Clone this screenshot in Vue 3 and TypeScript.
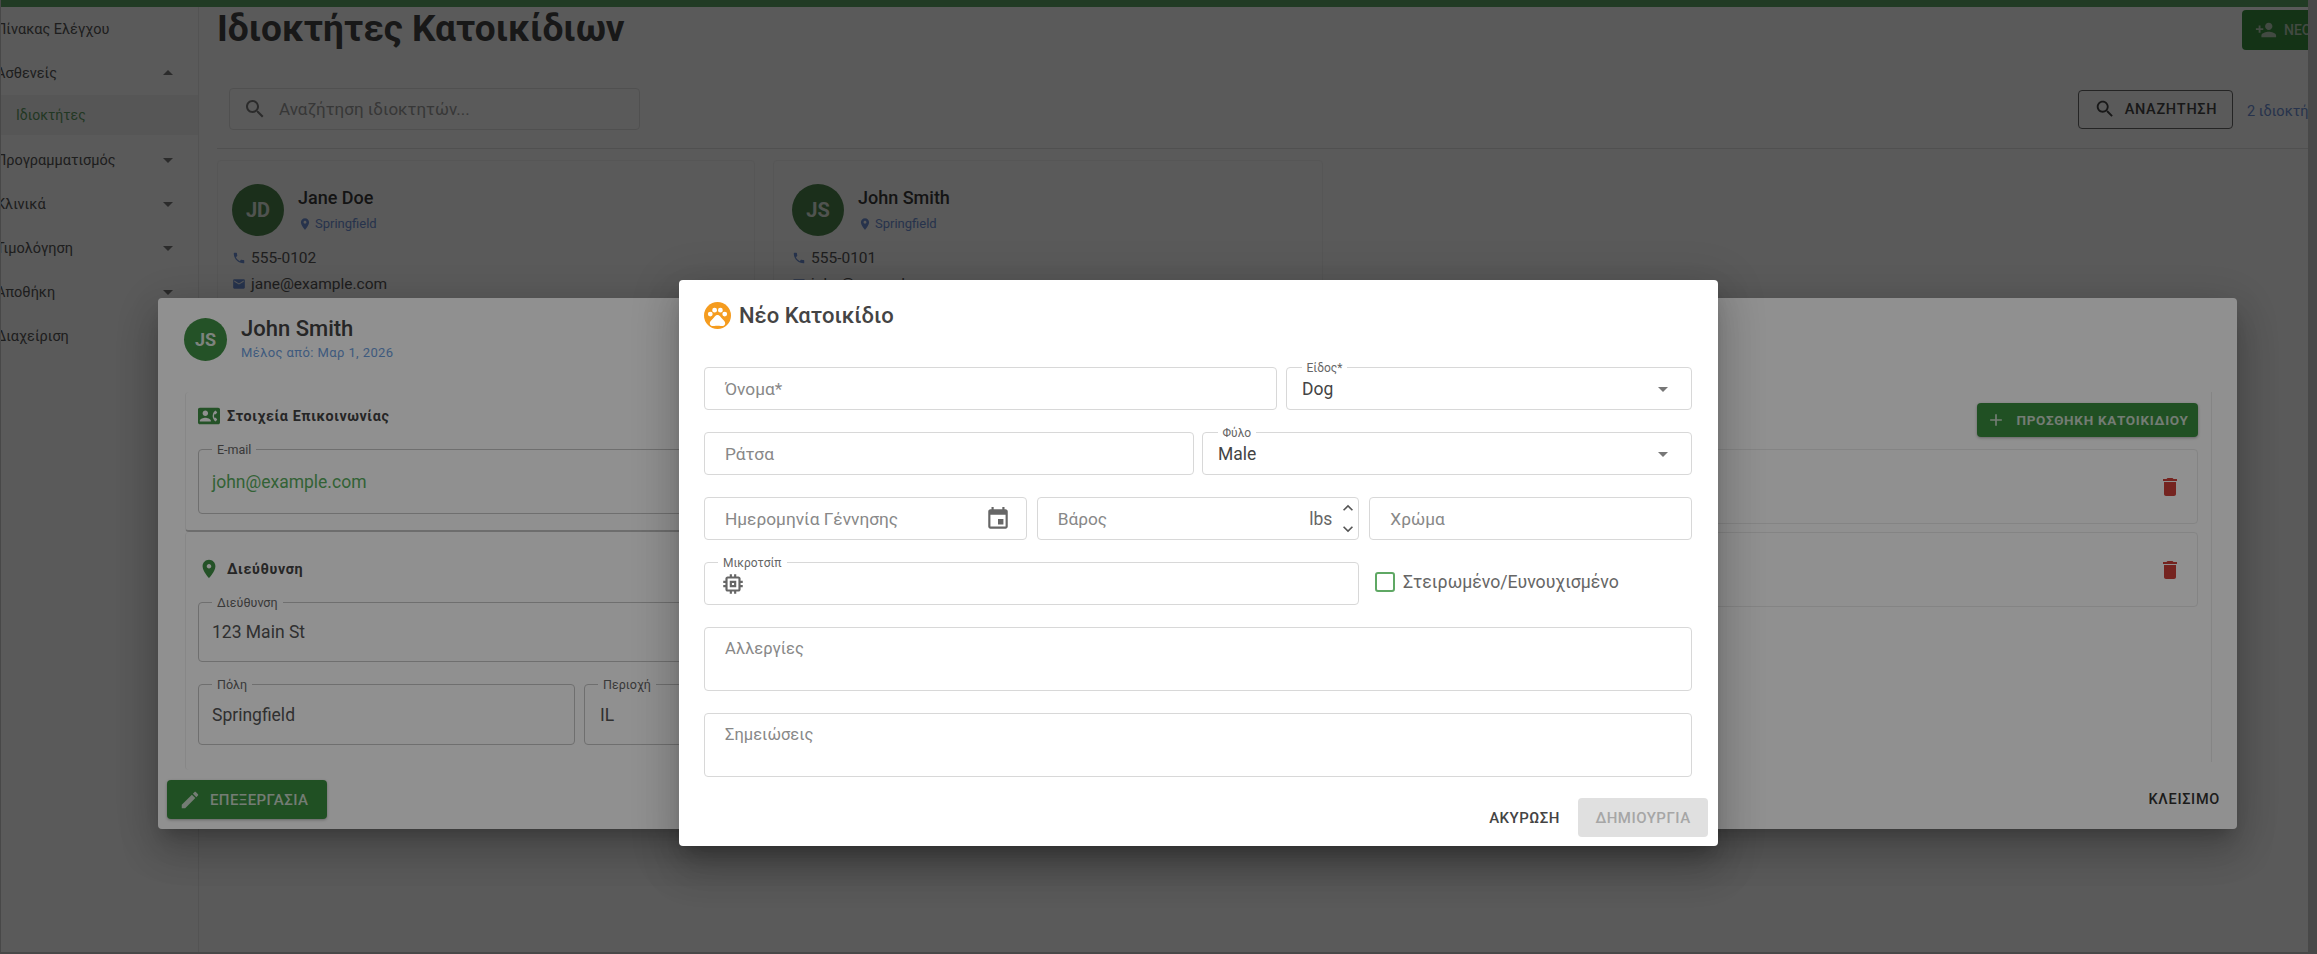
<template>
  <div class="app">
    <div class="shell">
      <div class="top-line"></div>
      <div class="page">
        <!-- side menu -->
        <aside class="sidebar">
          <div
            v-for="item in navItems"
            :key="item.label"
            :class="['nav-item', { child: item.child }]"
          >
            <span class="nav-label">{{ item.label }}</span>
            <svg v-if="item.arrow" class="nav-arrow" viewBox="0 0 24 24">
              <path :d="item.arrow === 'up' ? icons.arrowUp : icons.arrowDown" />
            </svg>
          </div>
        </aside>

        <main class="content">
          <div class="head-row">
            <h1>Ιδιοκτήτες Κατοικίδιων</h1>
            <button class="btn-new">
              <svg viewBox="0 0 24 24"><path :d="icons.personAdd" /></svg>
              <span>ΝΕΟΣ ΙΔΙΟΚΤΗΤΗΣ</span>
            </button>
          </div>

          <div class="search-row">
            <div class="search-box">
              <svg viewBox="0 0 24 24"><path :d="icons.search" /></svg>
              <span>Αναζήτηση ιδιοκτητών...</span>
            </div>
            <button class="btn-search">
              <svg viewBox="0 0 24 24"><path :d="icons.search" /></svg>
              <span>ΑΝΑΖΗΤΗΣΗ</span>
            </button>
            <span class="owner-count">2 ιδιοκτήτες</span>
          </div>

          <div class="owner-grid">
            <div v-for="owner in owners" :key="owner.initials" class="owner-card">
              <div class="owner-top">
                <div class="avatar">{{ owner.initials }}</div>
                <div>
                  <div class="owner-name">{{ owner.name }}</div>
                  <div class="owner-city">
                    <svg viewBox="0 0 24 24"><path :d="icons.pin" /></svg>
                    <span>{{ owner.city }}</span>
                  </div>
                </div>
              </div>
              <div class="owner-line">
                <svg viewBox="0 0 24 24"><path :d="icons.phone" /></svg>
                <span>{{ owner.phone }}</span>
              </div>
              <div class="owner-line">
                <svg viewBox="0 0 24 24"><path :d="icons.mail" /></svg>
                <span>{{ owner.email }}</span>
              </div>
            </div>
          </div>
        </main>
      </div>
    </div>

    <div class="backdrop first"></div>

    <!-- owner details dialog -->
    <section class="detail-dialog">
      <header class="detail-head">
        <div class="avatar small">JS</div>
        <div>
          <div class="detail-name">John Smith</div>
          <div class="detail-since">Μέλος από: Μαρ 1, 2026</div>
        </div>
      </header>

      <div class="detail-body">
        <div class="detail-left">
          <div class="paper contact">
            <div class="paper-title">
              <svg viewBox="0 0 24 24"><path :d="icons.contact" /></svg>
              <span>Στοιχεία Επικοινωνίας</span>
            </div>
            <div class="read-field email">
              <label>E-mail</label>
              <span class="link">john@example.com</span>
            </div>
          </div>
          <div class="paper address">
            <div class="paper-title">
              <svg viewBox="0 0 24 24"><path :d="icons.pin" /></svg>
              <span>Διεύθυνση</span>
            </div>
            <div class="read-field street">
              <label>Διεύθυνση</label>
              <span>123 Main St</span>
            </div>
            <div class="city-row">
              <div class="read-field city">
                <label>Πόλη</label>
                <span>Springfield</span>
              </div>
              <div class="read-field region">
                <label>Περιοχή</label>
                <span>IL</span>
              </div>
            </div>
          </div>
        </div>

        <div class="detail-right">
          <button class="btn-green add-pet">
            <svg viewBox="0 0 24 24"><path :d="icons.plus" /></svg>
            <span>ΠΡΟΣΘΗΚΗ ΚΑΤΟΙΚΙΔΙΟΥ</span>
          </button>
          <div v-for="n in 2" :key="n" class="pet-row">
            <svg viewBox="0 0 24 24"><path :d="icons.trash" /></svg>
          </div>
        </div>
      </div>

      <footer class="detail-foot">
        <button class="btn-green edit">
          <svg viewBox="0 0 24 24"><path :d="icons.edit" /></svg>
          <span>ΕΠΕΞΕΡΓΑΣΙΑ</span>
        </button>
        <button class="btn-close">ΚΛΕΙΣΙΜΟ</button>
      </footer>
    </section>

    <div class="backdrop second"></div>

    <!-- new pet dialog -->
    <section class="pet-dialog">
      <header class="pet-head">
        <svg class="paw" viewBox="0 0 28 28">
          <circle cx="14" cy="14" r="14" fill="#f59c1f" />
          <g transform="translate(2 3)"><path :d="icons.paw" fill="#fff" /></g>
        </svg>
        <h2>Νέο Κατοικίδιο</h2>
      </header>

      <div class="form">
        <div class="form-row row-name">
          <div class="input"><span class="hint">Όνομα*</span></div>
          <div class="input select">
            <label>Είδος*</label>
            <span class="value">Dog</span>
            <svg viewBox="0 0 24 24"><path :d="icons.arrowDown" /></svg>
          </div>
        </div>
        <div class="form-row row-breed">
          <div class="input"><span class="hint">Ράτσα</span></div>
          <div class="input select">
            <label>Φύλο</label>
            <span class="value">Male</span>
            <svg viewBox="0 0 24 24"><path :d="icons.arrowDown" /></svg>
          </div>
        </div>
        <div class="form-row row-three">
          <div class="input">
            <span class="hint">Ημερομηνία Γέννησης</span>
            <svg class="calendar" viewBox="0 0 24 24"><path :d="icons.calendar" /></svg>
          </div>
          <div class="input weight">
            <span class="hint">Βάρος</span>
            <span class="unit">lbs</span>
            <div class="spinner">
              <svg viewBox="0 0 24 24"><path :d="icons.chevronUp" /></svg>
              <svg viewBox="0 0 24 24"><path :d="icons.chevronDown" /></svg>
            </div>
          </div>
          <div class="input"><span class="hint">Χρώμα</span></div>
        </div>
        <div class="form-row row-chip">
          <div class="input chip">
            <label>Μικροτσίπ</label>
            <svg viewBox="0 0 24 24"><path :d="icons.chip" /></svg>
          </div>
          <div class="check">
            <span class="box"></span>
            <span>Στειρωμένο/Ευνουχισμένο</span>
          </div>
        </div>
        <div class="input area"><span class="hint">Αλλεργίες</span></div>
        <div class="input area"><span class="hint">Σημειώσεις</span></div>
      </div>

      <footer class="pet-foot">
        <button class="btn-cancel">ΑΚΥΡΩΣΗ</button>
        <button class="btn-create" disabled>ΔΗΜΙΟΥΡΓΙΑ</button>
      </footer>
    </section>
  </div>
</template>

<script setup lang="ts">
interface NavItem {
  label: string;
  arrow?: 'up' | 'down';
  child?: boolean;
}

const navItems: NavItem[] = [
  { label: 'Πίνακας Ελέγχου' },
  { label: 'Ασθενείς', arrow: 'up' },
  { label: 'Ιδιοκτήτες', child: true },
  { label: 'Προγραμματισμός', arrow: 'down' },
  { label: 'Κλινικά', arrow: 'down' },
  { label: 'Τιμολόγηση', arrow: 'down' },
  { label: 'Αποθήκη', arrow: 'down' },
  { label: 'Διαχείριση' },
];

const owners = [
  { initials: 'JD', name: 'Jane Doe', city: 'Springfield', phone: '555-0102', email: 'jane@example.com' },
  { initials: 'JS', name: 'John Smith', city: 'Springfield', phone: '555-0101', email: 'john@example.com' },
];

const icons = {
  arrowUp: 'M7 14l5-5 5 5z',
  arrowDown: 'M7 10l5 5 5-5z',
  search: 'M15.5 14h-.79l-.28-.27C15.41 12.59 16 11.11 16 9.5 16 5.91 13.09 3 9.5 3S3 5.91 3 9.5 5.91 16 9.5 16c1.61 0 3.09-.59 4.23-1.57l.27.28v.79l5 4.99L20.49 19l-4.99-5zm-6 0C7.01 14 5 11.99 5 9.5S7.01 5 9.5 5 14 7.01 14 9.5 11.99 14 9.5 14z',
  personAdd: 'M15 12c2.21 0 4-1.79 4-4s-1.79-4-4-4-4 1.79-4 4 1.79 4 4 4zm-9-2V7H4v3H1v2h3v3h2v-3h3v-2H6zm9 4c-2.67 0-8 1.34-8 4v2h16v-2c0-2.66-5.33-4-8-4z',
  pin: 'M12 2C8.13 2 5 5.13 5 9c0 5.25 7 13 7 13s7-7.75 7-13c0-3.87-3.13-7-7-7zm0 9.5c-1.38 0-2.5-1.12-2.5-2.5s1.12-2.5 2.5-2.5 2.5 1.12 2.5 2.5-1.12 2.5-2.5 2.5z',
  phone: 'M6.62 10.79c1.44 2.83 3.76 5.14 6.59 6.59l2.2-2.2c.27-.27.67-.36 1.02-.24 1.12.37 2.33.57 3.57.57.55 0 1 .45 1 1V20c0 .55-.45 1-1 1-9.39 0-17-7.61-17-17 0-.55.45-1 1-1h3.5c.55 0 1 .45 1 1 0 1.25.2 2.45.57 3.57.11.35.03.74-.25 1.02l-2.2 2.2z',
  mail: 'M20 4H4c-1.1 0-1.99.9-1.99 2L2 18c0 1.1.9 2 2 2h16c1.1 0 2-.9 2-2V6c0-1.1-.9-2-2-2zm0 4l-8 5-8-5V6l8 5 8-5v2z',
  contact: 'M22 3H2C.9 3 0 3.9 0 5v14c0 1.1.9 2 2 2h20c1.1 0 1.99-.9 1.99-2L24 5c0-1.1-.9-2-2-2zM8 6c1.66 0 3 1.34 3 3s-1.34 3-3 3-3-1.34-3-3 1.34-3 3-3zm6 12H2v-1c0-2 4-3.1 6-3.1s6 1.1 6 3.1v1zm3.85-4h1.64L21 16l-1.99 1.99c-1.31-.98-2.28-2.38-2.73-3.99-.18-.64-.28-1.31-.28-2s.1-1.36.28-2c.45-1.62 1.42-3.01 2.73-3.99L21 8l-1.51 2h-1.64c-.22.63-.35 1.3-.35 2s.13 1.37.35 2z',
  edit: 'M3 17.25V21h3.75L17.81 9.94l-3.75-3.75L3 17.25zM20.71 7.04c.39-.39.39-1.02 0-1.41l-2.34-2.34c-.39-.39-1.02-.39-1.41 0l-1.83 1.83 3.75 3.75 1.83-1.83z',
  plus: 'M19 13h-6v6h-2v-6H5v-2h6V5h2v6h6v2z',
  trash: 'M6 19c0 1.1.9 2 2 2h8c1.1 0 2-.9 2-2V7H6v12zM19 4h-3.5l-1-1h-5l-1 1H5v2h14V4z',
  calendar: 'M17 12h-5v5h5v-5zM16 1v2H8V1H6v2H5c-1.11 0-1.99.9-1.99 2L3 19c0 1.1.89 2 2 2h14c1.1 0 2-.9 2-2V5c0-1.1-.9-2-2-2h-1V1h-2zm3 18H5V8h14v11z',
  chip: 'M15 9H9v6h6V9zm-2 4h-2v-2h2v2zm8-2V9h-2V7c0-1.1-.9-2-2-2h-2V3h-2v2h-2V3H9v2H7c-1.1 0-2 .9-2 2v2H3v2h2v2H3v2h2v2c0 1.1.9 2 2 2h2v2h2v-2h2v2h2v-2h2c1.1 0 2-.9 2-2v-2h2v-2h-2v-2h2zm-4 6H7V7h10v10z',
  chevronUp: 'M7.41 15.41L12 10.83l4.59 4.58L18 14l-6-6-6 6z',
  chevronDown: 'M7.41 8.59L12 13.17l4.59-4.58L18 10l-6 6-6-6z',
  paw: 'M4.5 7a2.5 2.5 0 1 0 0 5 2.5 2.5 0 0 0 0-5zM9 3a2.5 2.5 0 1 0 0 5 2.5 2.5 0 0 0 0-5zM15 3a2.5 2.5 0 1 0 0 5 2.5 2.5 0 0 0 0-5zM19.5 7a2.5 2.5 0 1 0 0 5 2.5 2.5 0 0 0 0-5zM17.34 14.86c-.87-1.02-1.6-1.89-2.48-2.91-.46-.54-1.05-1.08-1.75-1.32-.11-.04-.22-.07-.33-.09-.25-.04-.52-.04-.78-.04s-.53 0-.79.05c-.11.02-.22.05-.33.09-.7.24-1.28.78-1.75 1.32-.87 1.02-1.6 1.89-2.48 2.91-1.31 1.31-2.92 2.76-2.62 4.79.29 1.02 1.02 2.03 2.33 2.32.73.15 3.06-.44 5.54-.44h.18c2.48 0 4.81.58 5.54.44 1.31-.29 2.04-1.31 2.33-2.32.31-2.04-1.3-3.49-2.61-4.8z',
};
</script>

<style>
html,
body {
  margin: 0;
  background: #dcdcdc;
}
</style>

<style scoped>
.app {
  position: relative;
  width: 2317px;
  height: 954px;
  padding: 0 9px 2px 1px;
  box-sizing: border-box;
  overflow: hidden;
  background: #c8c8c8;
  font-family: Roboto, "Noto Sans", sans-serif;
  color: #222;
}

svg {
  display: block;
  flex: none;
  fill: currentColor;
}

button {
  font-family: inherit;
  border: none;
  background: none;
  padding: 0;
}

.shell {
  height: 100%;
  display: flex;
  flex-direction: column;
  overflow: hidden;
  background: #fafafa;
}

.top-line {
  height: 7px;
  flex: none;
  background: #5fa564;
}

.page {
  flex: 1;
  display: flex;
  min-height: 0;
}

/* sidebar */
.sidebar {
  width: 197px;
  flex: none;
  border-right: 1px solid #e8e8e8;
}

.nav-item {
  height: 44px;
  display: flex;
  align-items: center;
  justify-content: space-between;
  padding-right: 18px;
  font-size: 14.5px;
  color: #555;
}

.nav-item.child {
  background: #f0f0f0;
  height: 40px;
  margin-bottom: 3px;
  padding-left: 15px;
  font-size: 14px;
  color: #5f9a62;
}

.nav-label {
  margin-left: -5px;
  white-space: nowrap;
}

.child .nav-label {
  margin-left: 0;
}

.nav-arrow {
  width: 24px;
  height: 24px;
  color: #777;
}

/* owners page */
.content {
  flex: 1;
  min-width: 0;
  padding-left: 18px;
  display: flex;
  flex-direction: column;
}

.head-row {
  display: flex;
  align-items: flex-start;
  justify-content: space-between;
  height: 81px;
}

h1 {
  margin: 3px 0 0;
  font-size: 37px;
  line-height: 38px;
  font-weight: 700;
  color: #444;
}

.btn-new {
  margin-top: 3px;
  width: 66px;
  height: 40px;
  flex: none;
  display: flex;
  align-items: center;
  gap: 7px;
  padding-left: 13px;
  box-sizing: border-box;
  overflow: hidden;
  border-radius: 4px 0 0 4px;
  background: #3a8f3f;
  color: #b9cdb9;
  font-size: 14px;
  font-weight: 500;
  white-space: nowrap;
}

.btn-new svg {
  width: 22px;
  height: 22px;
}

.search-row {
  display: flex;
  align-items: center;
  height: 60px;
  padding-left: 12px;
  border-bottom: 1px solid #e0e0e0;
}

.search-box {
  width: 411px;
  height: 42px;
  flex: none;
  margin-top: -18px;
  margin-right: auto;
  box-sizing: border-box;
  display: flex;
  align-items: center;
  gap: 12px;
  padding-left: 13px;
  border: 1px solid #e0e0e0;
  border-radius: 4px;
  font-size: 17px;
  color: #9a9a9a;
}

.search-box svg {
  width: 24px;
  height: 24px;
  color: #777;
}

.btn-search {
  width: 155px;
  height: 39px;
  flex: none;
  margin-top: -18px;
  display: flex;
  align-items: center;
  justify-content: center;
  gap: 9px;
  box-sizing: border-box;
  border: 1.5px solid #666;
  border-radius: 4px;
  font-size: 14.5px;
  font-weight: 500;
  letter-spacing: 0.7px;
  color: #444;
}

.btn-search svg {
  width: 22px;
  height: 22px;
}

.owner-count {
  width: 61px;
  flex: none;
  margin-left: 14px;
  margin-top: -14px;
  overflow: hidden;
  font-size: 14.5px;
  color: #6d8fd4;
  white-space: nowrap;
}

.owner-grid {
  display: flex;
  gap: 18px;
  padding-top: 11px;
}

.owner-card {
  width: 538px;
  height: 260px;
  box-sizing: border-box;
  padding: 23px 14px;
  border: 1px solid #efefef;
  border-radius: 4px;
}

.owner-card:last-child {
  width: 550px;
  padding-left: 18px;
}

.owner-top {
  display: flex;
  gap: 14px;
  margin-bottom: 9px;
}

.avatar {
  width: 52px;
  height: 52px;
  border-radius: 50%;
  display: flex;
  align-items: center;
  justify-content: center;
  background: #4c824c;
  color: #dfe8df;
  font-size: 20px;
  font-weight: 700;
}

.avatar.small {
  width: 43px;
  height: 43px;
  font-size: 18px;
  background: #409145;
}

.owner-name {
  font-size: 18px;
  line-height: 24px;
  font-weight: 500;
  color: #3a3a3a;
  margin-top: 2px;
}

.owner-city {
  display: flex;
  align-items: center;
  gap: 3px;
  margin-top: 6px;
  font-size: 13px;
  color: #6d8fd4;
}

.owner-city svg {
  width: 14px;
  height: 14px;
}

.owner-line {
  display: flex;
  align-items: center;
  gap: 5px;
  height: 26px;
  font-size: 15.5px;
  color: #555;
}

.owner-line svg {
  width: 14px;
  height: 14px;
  color: #6d8fd4;
}

.backdrop {
  position: absolute;
  inset: 0;
}

.backdrop.first {
  background: rgba(0, 0, 0, 0.36);
}

.backdrop.second {
  background: rgba(0, 0, 0, 0.435);
}

/* owner details */
.detail-dialog {
  position: absolute;
  left: 158px;
  top: 298px;
  width: 2079px;
  height: 531px;
  display: flex;
  flex-direction: column;
  box-sizing: border-box;
  background: #fff;
  border-radius: 4px;
  box-shadow: 0 11px 15px -7px rgba(0, 0, 0, 0.2), 0 24px 38px 3px rgba(0, 0, 0, 0.14), 0 9px 46px 8px rgba(0, 0, 0, 0.12);
}

.detail-head {
  display: flex;
  gap: 14px;
  height: 94px;
  flex: none;
  box-sizing: border-box;
  padding: 20px 0 0 26px;
}

.detail-name {
  font-size: 22px;
  line-height: 22px;
  font-weight: 500;
  color: #444;
}

.detail-since {
  margin-top: 5px;
  font-size: 13px;
  letter-spacing: 0.4px;
  color: #6f9fe0;
}

.detail-body {
  flex: 1;
  display: flex;
  gap: 20px;
  padding: 0 25px 0 27px;
  min-height: 0;
}

.detail-left {
  width: 1000px;
  flex: none;
  display: flex;
  flex-direction: column;
}

.paper {
  box-sizing: border-box;
  border-radius: 4px;
  padding: 0 12px;
  border-left: 1px solid #f0f0f0;
}

.paper.contact {
  height: 140px;
  padding-top: 15px;
  border-bottom: 2px solid #c2c2c2;
}

.paper.address {
  flex: 1;
  padding-top: 28px;
}

.paper-title {
  display: flex;
  align-items: center;
  gap: 7px;
  height: 18px;
  font-size: 14.3px;
  font-weight: 700;
  letter-spacing: 0.6px;
  color: #444;
}

.paper-title svg {
  width: 22px;
  height: 22px;
  color: #409145;
}

.read-field {
  position: relative;
  box-sizing: border-box;
  display: flex;
  align-items: center;
  padding-left: 13px;
  border: 1px solid #c4c4c4;
  border-radius: 4px;
  font-size: 17.5px;
  color: #555;
}

.read-field label {
  position: absolute;
  top: -8px;
  left: 13px;
  padding: 0 5px;
  font-size: 12.5px;
  line-height: 16px;
  background: #fff;
  color: #666;
}

.read-field.email {
  height: 65px;
  margin-top: 24px;
}

.read-field.street {
  height: 60px;
  margin-top: 24px;
}

.link {
  color: #5aae60;
}

.city-row {
  display: flex;
  gap: 9px;
  margin-top: 22px;
}

.read-field.city {
  width: 377px;
  height: 61px;
}

.read-field.region {
  flex: 1;
  height: 61px;
  padding-left: 15px;
}

.detail-right {
  flex: 1;
  display: flex;
  flex-direction: column;
  align-items: flex-end;
  box-sizing: border-box;
  height: 370px;
  padding: 11px 13px 0 0;
  border-right: 1px solid #ececec;
}

.btn-green {
  display: flex;
  align-items: center;
  border-radius: 4px;
  background: #3a8f3f;
  color: #cddccd;
  font-weight: 500;
  box-shadow: 0 1px 3px rgba(0, 0, 0, 0.3);
}

.add-pet {
  width: 221px;
  height: 34px;
  flex: none;
  justify-content: center;
  gap: 10px;
  font-size: 13.5px;
  font-weight: 700;
  letter-spacing: 0.7px;
}

.add-pet svg {
  width: 20px;
  height: 20px;
}

.pet-row {
  width: 100%;
  height: 75px;
  flex: none;
  margin-top: 12px;
  box-sizing: border-box;
  display: flex;
  align-items: center;
  justify-content: flex-end;
  padding-right: 15px;
  border: 1px solid #eaeaea;
  border-radius: 4px;
  color: #d0403a;
}

.pet-row + .pet-row {
  margin-top: 8px;
}

.pet-row svg {
  width: 24px;
  height: 24px;
}

.detail-foot {
  flex: none;
  display: flex;
  align-items: center;
  justify-content: space-between;
  height: 59px;
  box-sizing: border-box;
  padding: 0 17px 0 9px;
}

.edit {
  width: 160px;
  height: 39px;
  gap: 9px;
  padding-left: 12px;
  box-sizing: border-box;
  font-size: 15px;
  letter-spacing: 0.4px;
}

.edit svg {
  width: 22px;
  height: 22px;
}

.btn-close {
  font-size: 14.5px;
  font-weight: 500;
  letter-spacing: 0.7px;
  color: #333;
}

/* new pet */
.pet-dialog {
  position: absolute;
  left: 679px;
  top: 280px;
  width: 1039px;
  height: 566px;
  display: flex;
  flex-direction: column;
  box-sizing: border-box;
  padding: 22px 10px 9px 25px;
  background: #fff;
  border-radius: 4px;
  box-shadow: 0 11px 15px -7px rgba(0, 0, 0, 0.2), 0 24px 38px 3px rgba(0, 0, 0, 0.14), 0 9px 46px 8px rgba(0, 0, 0, 0.12);
}

.pet-head {
  display: flex;
  align-items: center;
  gap: 8px;
  height: 27px;
  flex: none;
}

.paw {
  width: 27px;
  height: 27px;
}

h2 {
  margin: 0;
  font-size: 22px;
  font-weight: 500;
  color: #444;
}

.form {
  width: 988px;
  margin-top: 38px;
  display: flex;
  flex-direction: column;
  gap: 22px;
}

.form-row {
  display: grid;
}

.row-name {
  grid-template-columns: 573px 1fr;
  column-gap: 9px;
}

.row-breed {
  grid-template-columns: 1fr 1fr;
  column-gap: 8px;
}

.row-three {
  grid-template-columns: repeat(3, 1fr);
  column-gap: 10px;
}

.row-chip {
  grid-template-columns: 655px 1fr;
  column-gap: 16px;
  align-items: center;
}

.input {
  position: relative;
  box-sizing: border-box;
  height: 43px;
  display: flex;
  align-items: center;
  padding: 0 8px 0 20px;
  border: 1px solid #d8d8d8;
  border-radius: 4px;
  font-size: 17.3px;
}

.hint {
  color: #888;
  white-space: nowrap;
}

.input label {
  position: absolute;
  top: -7px;
  left: 13px;
  padding: 0 5px;
  font-size: 12px;
  line-height: 14px;
  background: #fff;
  color: #666;
}

.select {
  padding-left: 15px;
  justify-content: space-between;
  padding-top: 1px;
  padding-right: 16px;
  font-size: 17.5px;
}

.select label {
  left: 14.5px;
}

.select .value {
  color: #444;
}

.select svg {
  width: 24px;
  height: 24px;
  color: #777;
}

.calendar {
  position: absolute;
  right: 15px;
  top: 8px;
  width: 26px;
  height: 26px;
  color: #666;
}

.input.weight {
  padding-right: 0;
}

.unit {
  margin-left: auto;
  color: #666;
  font-size: 17.5px;
}

.spinner {
  margin-left: 6px;
  display: flex;
  flex-direction: column;
  gap: 1px;
  color: #555;
}

.spinner svg {
  width: 20px;
  height: 20px;
}

.input.chip {
  padding-left: 15px;
}

.chip svg {
  width: 26px;
  height: 26px;
  color: #666;
}

.check {
  display: flex;
  align-items: center;
  gap: 8px;
  margin-top: -4px;
  font-size: 17.7px;
  color: #666;
  white-space: nowrap;
}

.box {
  width: 20px;
  height: 20px;
  box-sizing: border-box;
  border: 2px solid #5fa864;
  border-radius: 3px;
}

.input.area {
  height: 64px;
  align-items: flex-start;
  padding-top: 11px;
  font-size: 16.5px;
}

.pet-foot {
  margin-top: auto;
  display: flex;
  align-items: center;
  justify-content: flex-end;
  gap: 18px;
}

.btn-cancel {
  font-size: 15px;
  font-weight: 500;
  letter-spacing: 0.5px;
  color: #444;
}

.btn-create {
  width: 130px;
  height: 39px;
  border-radius: 4px;
  background: #e0e0e0;
  font-size: 15px;
  font-weight: 500;
  letter-spacing: 0.5px;
  color: #a6a6a6;
}
</style>
